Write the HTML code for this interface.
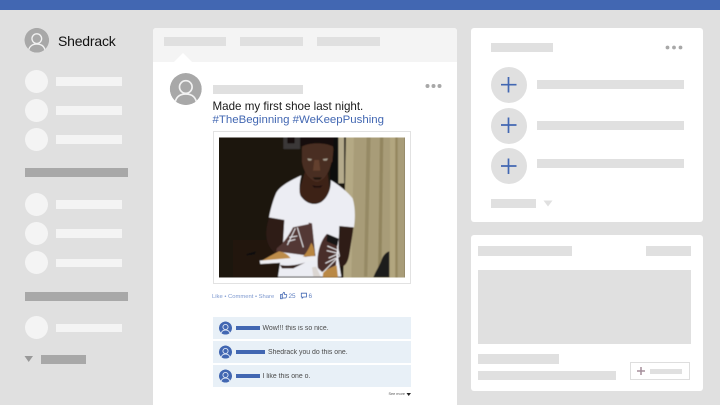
<!DOCTYPE html>
<html><head><meta charset="utf-8"><style>
html,body{margin:0;padding:0}
body{width:720px;height:405px;background:#e0e0e0;position:relative;overflow:hidden;font-family:"Liberation Sans",sans-serif}
div,span.a{position:absolute}
.t{white-space:nowrap}
.l{background:#f4f4f4}.g{background:#e0e0e0}.d{background:#a8a8a8}
.c{border-radius:50%}
.cm{left:212.5px;width:198.5px;height:22.5px;background:#e8f0f7}
.cb{left:235.5px;height:3.5px;background:#4267b2;width:24.5px}
.ct{font-size:6.9px;color:#4a4a4a;white-space:nowrap;filter:blur(.25px);line-height:10px}
svg{position:absolute;left:0;top:0}
</style></head><body>
<div style="left:0;top:0;width:720px;height:9.5px;background:#4267b2"></div>

<!-- left sidebar -->
<div class="t" style="left:58px;top:33px;font-size:14px;line-height:16px;color:#111;letter-spacing:-.2px">Shedrack</div>
<div class="l c" style="left:24.5px;top:69.5px;width:23px;height:23px"></div><div class="l" style="left:55.5px;top:77px;width:66px;height:9px"></div>
<div class="l c" style="left:24.5px;top:99px;width:23px;height:23px"></div><div class="l" style="left:55.5px;top:106px;width:66px;height:9px"></div>
<div class="l c" style="left:24.5px;top:128px;width:23px;height:23px"></div><div class="l" style="left:55.5px;top:135px;width:66px;height:9px"></div>
<div class="d" style="left:24.5px;top:168px;width:103.5px;height:8.5px"></div>
<div class="l c" style="left:24.5px;top:192.5px;width:23px;height:23px"></div><div class="l" style="left:55.5px;top:200px;width:66px;height:8.5px"></div>
<div class="l c" style="left:24.5px;top:222px;width:23px;height:23px"></div><div class="l" style="left:55.5px;top:229px;width:66px;height:9px"></div>
<div class="l c" style="left:24.5px;top:251px;width:23px;height:23px"></div><div class="l" style="left:55.5px;top:258.5px;width:66px;height:8.5px"></div>
<div class="d" style="left:24.5px;top:292px;width:103.5px;height:8.5px"></div>
<div class="l c" style="left:24.5px;top:316px;width:23px;height:23px"></div><div class="l" style="left:55.5px;top:323.5px;width:66px;height:8.5px"></div>
<div class="d" style="left:41px;top:354.5px;width:45px;height:9.5px"></div>

<!-- center card -->
<div style="left:153px;top:28px;width:304px;height:377px;background:#fff;border-radius:3px 3px 0 0"></div>
<div class="l" style="left:153px;top:28px;width:304px;height:34px;border-radius:3px 3px 0 0"></div>
<div class="g" style="left:163.5px;top:37px;width:62.5px;height:9px"></div>
<div class="g" style="left:240px;top:37px;width:62.5px;height:9px"></div>
<div class="g" style="left:317px;top:37px;width:62.5px;height:9px"></div>
<div class="g" style="left:212.5px;top:85px;width:90.5px;height:9px"></div>
<div class="t" style="left:212.5px;top:98.5px;font-size:11.6px;line-height:15px;color:#1a1a1a">Made my first shoe last night.</div>
<div class="t" style="left:212.5px;top:112.5px;font-size:11.45px;line-height:15px;color:#4267b2">#TheBeginning #WeKeepPushing</div>
<div style="left:212.5px;top:131px;width:196.5px;height:151px;border:1px solid #e2e2e2"></div>

<div class="t" style="left:212px;top:291.5px;font-size:5.85px;line-height:10px;color:#7f9ad0;filter:blur(.2px)">Like • Comment • Share</div>
<div class="t" style="left:288.5px;top:291.5px;font-size:6.4px;line-height:10px;color:#5f7fc0;filter:blur(.2px)">25</div>
<div class="t" style="left:308.5px;top:291.5px;font-size:6.4px;line-height:10px;color:#5f7fc0;filter:blur(.2px)">6</div>

<div class="cm" style="top:316.7px"></div>
<div class="cm" style="top:340.5px"></div>
<div class="cm" style="top:364.5px"></div>
<div class="cb" style="top:326px"></div>
<div class="cb" style="top:350px;width:29px"></div>
<div class="cb" style="top:374px"></div>
<div class="ct" style="left:262.5px;top:324px">Wow!!! this is so nice.</div>
<div class="ct" style="left:268px;top:348px">Shedrack you do this one.</div>
<div class="ct" style="left:262.5px;top:372px">I like this one o.</div>
<div class="t" style="left:388.5px;top:391px;font-size:3.8px;line-height:6px;color:#555">See more</div>

<!-- right card 1 -->
<div style="left:471px;top:28px;width:232px;height:194px;background:#fff;border-radius:3px"></div>
<div class="g" style="left:490.5px;top:43px;width:62.5px;height:9px"></div>
<div class="g c" style="left:490.5px;top:67px;width:36px;height:36px"></div>
<div class="g c" style="left:490.5px;top:107.5px;width:36px;height:36px"></div>
<div class="g c" style="left:490.5px;top:148px;width:36px;height:36px"></div>
<div class="g" style="left:537px;top:80px;width:147px;height:9px"></div>
<div class="g" style="left:537px;top:120.5px;width:147px;height:9px"></div>
<div class="g" style="left:537px;top:159px;width:147px;height:9px"></div>
<div class="g" style="left:490.5px;top:199px;width:45px;height:9px"></div>

<!-- right card 2 -->
<div style="left:471px;top:235px;width:232px;height:156px;background:#fff;border-radius:3px"></div>
<div class="g" style="left:478px;top:246px;width:93.5px;height:9.5px"></div>
<div class="g" style="left:646px;top:246px;width:44.5px;height:9.5px"></div>
<div class="g" style="left:478px;top:270px;width:212.5px;height:73.5px"></div>
<div class="g" style="left:478px;top:354px;width:81px;height:9.5px"></div>
<div class="g" style="left:478px;top:371px;width:137.5px;height:9px"></div>
<div style="left:630px;top:361.5px;width:58px;height:16px;border:1.5px solid #dedede"></div>
<div class="g" style="left:650px;top:369px;width:32px;height:5px"></div>

<svg width="720" height="405" viewBox="0 0 720 405">
<defs>
<clipPath id="ph"><rect x="219" y="137.5" width="186" height="140"/></clipPath>
<clipPath id="av"><circle r="16"/></clipPath>
<filter id="b" x="-5%" y="-5%" width="110%" height="110%"><feGaussianBlur stdDeviation="1.8"/></filter>
<g id="avatar" clip-path="url(#av)">
<circle r="16" fill="#a8a8a8"/>
<circle cy="-2" r="6.3" fill="none" stroke="#f2f2f2" stroke-width="1.7"/>
<path d="M-11 17C-11 8-6 5 0 5S11 8 11 17" fill="#a8a8a8" stroke="#f2f2f2" stroke-width="1.7"/>
</g>
<g id="avb" clip-path="url(#av)">
<circle r="16" fill="#4267b2"/>
<circle cy="-2.5" r="6.3" fill="none" stroke="#dfe7f5" stroke-width="2.2"/>
<path d="M-11 17C-11 8-6 5 0 5S11 8 11 17" fill="#4267b2" stroke="#dfe7f5" stroke-width="2.2"/>
</g>
</defs>

<use href="#avatar" transform="translate(36.8 40.2) scale(.77)"/>
<use href="#avatar" transform="translate(185.8 89)"/>
<use href="#avb" transform="translate(225.5 328) scale(.41)"/>
<use href="#avb" transform="translate(225.5 352) scale(.41)"/>
<use href="#avb" transform="translate(225.5 376) scale(.41)"/>

<polygon points="174,62 183,53 192,62" fill="#fff"/>
<polygon points="24.5,356 33,356 28.7,362" fill="#999"/>
<polygon points="543.5,200.5 552.5,200.5 548,206.5" fill="#e0e0e0"/>
<polygon points="406.5,393 411,393 408.7,396" fill="#222"/>

<g fill="#a8a8a8"><circle cx="427.5" cy="86" r="2"/><circle cx="433.5" cy="86" r="2"/><circle cx="439.5" cy="86" r="2"/>
<circle cx="667.5" cy="47.5" r="1.9"/><circle cx="674" cy="47.5" r="1.9"/><circle cx="680.5" cy="47.5" r="1.9"/></g>

<g stroke="#4267b2" stroke-width="1.7" fill="none">
<path d="M501 84.7H516.5M508.5 77V92.5"/>
<path d="M501 125H516.5M508.5 117.5V133"/>
<path d="M501 166H516.5M508.5 158.5V174"/>
</g>
<path d="M637 371H645M641 367V375" stroke="#a58f9c" stroke-width="1.5" fill="none"/>

<!-- like & comment icons -->
<path d="M280.5 294.5h1.6v4.3h-1.6zM282.3 294.6l1.4-2.4c.7 0 1 .5.9 1.2l-.2 1h1.8c.5 0 .7.4.6.8l-.6 2.2c-.1.4-.4.6-.8.6h-3.1z" fill="none" stroke="#4267b2" stroke-width=".75"/>
<path d="M301.3 293.2h5.2v3.8h-3l-1.3 1.1v-1.1h-.9z" fill="none" stroke="#4267b2" stroke-width=".8"/>

<!-- photo -->
<g clip-path="url(#ph)"><g transform="translate(210 130) scale(.33333)"><g filter="url(#b)">
<rect x="20" y="15" width="570" height="430" fill="#1e1410"/>
<rect x="70" y="330" width="130" height="110" fill="#241711"/>
<path d="M110 372l28-8-4 9-24 3z" fill="#0c0a0a"/>
<rect x="220" y="15" width="50" height="42" fill="#3b3937"/>
<rect x="232" y="15" width="22" height="25" fill="#14110f"/>
<rect x="360" y="15" width="45" height="150" fill="#0b0808"/>
<!-- door/wall -->
<rect x="405" y="15" width="180" height="430" fill="#a89c78"/>
<rect x="385" y="15" width="18" height="145" fill="#b5ab8c"/>
<rect x="402" y="15" width="7" height="150" fill="#27211b"/>
<path d="M408 15h24l-8 430h-24z" fill="#b4a984"/>
<path d="M470 15h12l-10 425h-10z" fill="#968a65"/>
<path d="M510 15h10l-6 425h-10z" fill="#92855f"/>
<rect x="540" y="15" width="16" height="430" fill="#b2a67f"/>
<rect x="556" y="15" width="7" height="430" fill="#94875f"/>
<path d="M490 442c8-20 18-34 24-50 4-14 14-26 24-28v78z" fill="#1d1a1b"/>
<!-- arms -->
<path d="M178 262C168 290 165 320 176 345c8 16 22 28 34 36l12-20 3-100z" fill="#2e1c16"/>
<path d="M392 285c-2 30-6 60-12 80l8 42c16 8 26-10 30-35 5-30 10-60 13-85z" fill="#2e1b15"/>
<!-- neck and chest -->
<path d="M285 125l-18 60c20 45 70 50 92-5l-6-50z" fill="#3c2419"/>
<!-- shirt -->
<path d="M274 136C244 150 212 166 199 188C189 210 181 240 177 262L223 270L219 340L204 440H394L384 380L388 288L432 292C436 262 436 232 428 205C412 185 388 166 362 150C364 178 352 204 334 216C310 230 286 218 272 198C266 186 268 160 274 136Z" fill="#ecedf3"/>
<!-- head -->
<path d="M276 62c-2-24 16-40 46-40 30 0 50 14 48 40l-3 34-3 2c-4 24-18 52-42 58-24-4-42-32-46-60z" fill="#4a2e21"/>
<path d="M272 22h100l-2 28c-10-6-28-10-48-10-20 0-36 4-48 10z" fill="#17100d"/>
<path d="M313 90h14l4 32h-22z" fill="#64402f"/>
<path d="M292 85l14 2-3 5h-8zM338 87l16-2-4 7h-9z" fill="#a49b8d"/>
<path d="M308 142l28 0-6 7h-16z" fill="#1f1310"/>
<path d="M306 165c8 4 24 4 32 0l-6 8h-20z" fill="#1a110e"/>
<!-- left shoe -->
<path d="M304 280c-14 4-38 8-55 12-10 20-26 46-48 62l-3 10 118 16z" fill="#523734"/>
<path d="M296 278l10 2 10 96-34 6c14-12 18-30 20-46z" fill="#523734"/>
<path d="M304 338c8 14 10 26 10 40l-36 2c12-10 20-28 26-42z" fill="#b9863f"/>
<path d="M155 392c15-8 38-22 52-28 15 2 28 10 36 22z" fill="#bd8c48"/>
<path d="M149 392l167-14v14l-165 10z" fill="#eeeef2"/>
<path d="M232 345l24-50M238 322l24-4M234 334l22-6M262 292l18 60" stroke="#e6e6ea" stroke-width="3" fill="none"/>
<!-- right shoe -->
<path d="M350 312c14 4 30 12 34 20l-4 36-2 38-42 20-12-12c-4-20-2-70 26-102z" fill="#4a2f2b"/>
<path d="M352 312l34 14-4 22-32-14z" fill="#181416"/>
<path d="M340 424c10-4 26-14 40-18l4 36h-46z" fill="#b98844"/>
<path d="M352 348l34 14M350 362l36 8M356 384l28-12M346 400l32-16M334 432l54-54-6-30" stroke="#e9e9ec" stroke-width="3" fill="none"/>
<path d="M306 412l12-2 14 30h-22z" fill="#dbd6d2"/>
<path d="M210 405c20 4 55 0 76-8l-36 18-34 0z" fill="#2d1a14"/>
</g></g></g>
</svg>
</body></html>
